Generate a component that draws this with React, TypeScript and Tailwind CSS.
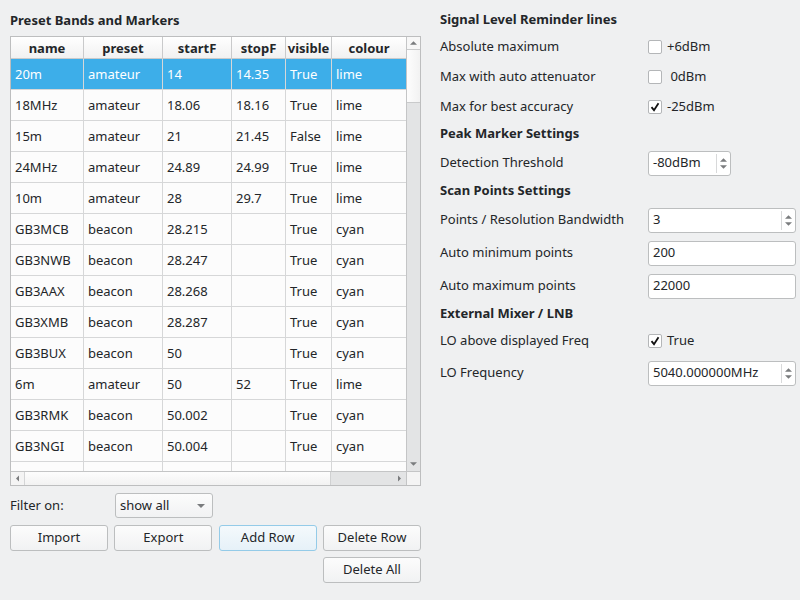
import React from 'react';

type Row = { name: string; preset: string; startF: string; stopF: string; visible: string; colour: string };

const rows: Row[] = [
  { name: '20m', preset: 'amateur', startF: '14', stopF: '14.35', visible: 'True', colour: 'lime' },
  { name: '18MHz', preset: 'amateur', startF: '18.06', stopF: '18.16', visible: 'True', colour: 'lime' },
  { name: '15m', preset: 'amateur', startF: '21', stopF: '21.45', visible: 'False', colour: 'lime' },
  { name: '24MHz', preset: 'amateur', startF: '24.89', stopF: '24.99', visible: 'True', colour: 'lime' },
  { name: '10m', preset: 'amateur', startF: '28', stopF: '29.7', visible: 'True', colour: 'lime' },
  { name: 'GB3MCB', preset: 'beacon', startF: '28.215', stopF: '', visible: 'True', colour: 'cyan' },
  { name: 'GB3NWB', preset: 'beacon', startF: '28.247', stopF: '', visible: 'True', colour: 'cyan' },
  { name: 'GB3AAX', preset: 'beacon', startF: '28.268', stopF: '', visible: 'True', colour: 'cyan' },
  { name: 'GB3XMB', preset: 'beacon', startF: '28.287', stopF: '', visible: 'True', colour: 'cyan' },
  { name: 'GB3BUX', preset: 'beacon', startF: '50', stopF: '', visible: 'True', colour: 'cyan' },
  { name: '6m', preset: 'amateur', startF: '50', stopF: '52', visible: 'True', colour: 'lime' },
  { name: 'GB3RMK', preset: 'beacon', startF: '50.002', stopF: '', visible: 'True', colour: 'cyan' },
  { name: 'GB3NGI', preset: 'beacon', startF: '50.004', stopF: '', visible: 'True', colour: 'cyan' },
  { name: '', preset: '', startF: '', stopF: '', visible: '', colour: '' },
];

const cols = 'grid grid-cols-[73px_79px_69px_54px_46px_75px]';
const headers = ['name', 'preset', 'startF', 'stopF', 'visible', 'colour'];

const Arrow = ({ dir, className = '' }: { dir: 'up' | 'down' | 'left' | 'right'; className?: string }) => {
  const pts = {
    up: '0,4 4,0 8,4',
    down: '0,0 8,0 4,4',
    left: '4,0 4,8 0,4',
    right: '0,0 0,8 4,4',
  }[dir];
  const vb = dir === 'up' || dir === 'down' ? '0 0 8 4' : '0 0 4 8';
  return (
    <svg viewBox={vb} className={className}>
      <polygon points={pts} fill="#7a7c7e" />
    </svg>
  );
};

const CheckBox = ({ checked }: { checked?: boolean }) => (
  <div className="w-[14px] h-[14px] border border-[#b4b6b8] bg-white rounded-[2px] flex items-center justify-center">
    {checked && (
      <svg viewBox="0 0 12 12" className="w-[12px] h-[12px]">
        <path d="M2.5 6.2 L5 9.2 L9.5 2.2" stroke="#111" strokeWidth="1.8" fill="none" />
      </svg>
    )}
  </div>
);

const SpinButtons = () => (
  <div className="w-[14px] h-full border-l border-[#d8d9da] flex flex-col items-center justify-center gap-[3px]">
    <Arrow dir="up" className="w-[7px] h-[4px]" />
    <Arrow dir="down" className="w-[7px] h-[4px]" />
  </div>
);

const SpinBox = ({ value, width }: { value: string; width: string }) => (
  <div className={`${width} h-[25px] border border-[#bcbebf] rounded-[3px] bg-white flex items-center`}>
    <span className="flex-1 pl-[4px]">{value}</span>
    <div className="h-[19px]">
      <SpinButtons />
    </div>
  </div>
);

const LineEdit = ({ value }: { value: string }) => (
  <div className="w-[148px] h-[25px] border border-[#bcbebf] rounded-[3px] bg-white flex items-center pl-[4px]">{value}</div>
);

const Button = ({ label, focus }: { label: string; focus?: boolean }) => (
  <button
    className={`w-[98px] h-[26px] rounded-[3px] border ${
      focus ? 'border-[#94cbe8] bg-gradient-to-b from-[#f4f9fc] to-[#e6f1f8]' : 'border-[#bcbebf] bg-gradient-to-b from-[#fcfcfc] to-[#f1f2f3]'
    } text-[13px] text-[#232629] flex items-center justify-center`}
  >
    {label}
  </button>
);

export default function App() {
  return (
    <div className="w-[800px] h-[600px] bg-[#eff0f1] flex font-['Noto_Sans',sans-serif] text-[13px] text-[#232629]">
      {/* left: presets table */}
      <div className="ml-[10px] w-[411px] flex flex-col">
        <div className="pt-[10px] h-[30px] font-bold leading-[20px]">Preset Bands and Markers</div>
        <div className="mt-[6px] h-[450px] border border-[#bdbebf] bg-white flex flex-col">
          <div className="flex h-[434px]">
            <div className="w-[395px] overflow-hidden">
              <div className={`${cols} h-[22px] bg-gradient-to-b from-white to-[#f1f1f1] border-b border-[#c9cacb]`}>
                {headers.map((h) => (
                  <div key={h} className="border-r border-[#c9cacb] font-bold flex items-center justify-center leading-none pt-[2px]">
                    {h}
                  </div>
                ))}
              </div>
              {rows.map((r, i) => {
                const sel = i === 0;
                return (
                  <div
                    key={i}
                    className={`${cols} h-[31px] border-b border-[#d6d7d8] ${sel ? 'bg-[#3daee9] text-white' : 'bg-[#fcfcfc]'}`}
                  >
                    {[r.name, r.preset, r.startF, r.stopF, r.visible, r.colour].map((c, j) => (
                      <div key={j} className="border-r border-[#d6d7d8] pl-[4px] pt-[2px] flex items-center whitespace-nowrap">
                        {c}
                      </div>
                    ))}
                  </div>
                );
              })}
            </div>
            {/* vertical scrollbar */}
            <div className="w-[14px] border-l border-[#c4c5c6] flex flex-col bg-[#e3e4e5]">
              <div className="h-[13px] bg-[#f7f7f7] border-b border-[#c9cacb] flex items-center justify-center">
                <Arrow dir="up" className="w-[7px] h-[4px]" />
              </div>
              <div className="h-[53px] bg-gradient-to-r from-[#fdfdfd] to-[#f2f2f2] border-b border-[#c9cacb]" />
              <div className="flex-1" />
              <div className="h-[15px] flex items-center justify-center">
                <Arrow dir="down" className="w-[7px] h-[4px]" />
              </div>
            </div>
          </div>
          {/* horizontal scrollbar */}
          <div className="h-[14px] border-t border-[#c4c5c6] flex">
            <div className="w-[14px] bg-[#f4f4f4] border-r border-[#d4d5d6] flex items-center justify-center">
              <Arrow dir="left" className="w-[3px] h-[7px]" />
            </div>
            <div className="w-[306px] bg-gradient-to-b from-[#fdfdfd] to-[#f2f2f2] border-r border-[#d0d1d2]" />
            <div className="w-[61px] bg-[#e3e4e5]" />
            <div className="w-[14px] bg-[#e3e4e5] flex items-center justify-center">
              <Arrow dir="right" className="w-[3px] h-[7px]" />
            </div>
            <div className="flex-1 border-l border-[#c4c5c6] bg-[#f4f4f4]" />
          </div>
        </div>
        {/* filter */}
        <div className="mt-[7px] h-[25px] flex items-center">
          <span className="w-[105px]">Filter on:</span>
          <div className="w-[98px] h-[25px] rounded-[3px] border border-[#bcbebf] bg-gradient-to-b from-[#fcfcfc] to-[#f1f2f3] flex items-center pl-[4px] pr-[7px]">
            <span className="flex-1">show all</span>
            <Arrow dir="down" className="w-[8px] h-[4px]" />
          </div>
        </div>
        <div className="mt-[7px] flex justify-between">
          <Button label="Import" />
          <Button label="Export" />
          <Button label="Add Row" focus />
          <Button label="Delete Row" />
        </div>
        <div className="mt-[6px] flex justify-end">
          <Button label="Delete All" />
        </div>
      </div>

      {/* right: settings */}
      <div className="ml-[19px] w-[356px] flex flex-col pt-[9px]">
        <div className="h-[22px] flex items-center font-bold">Signal Level Reminder lines</div>
        <div className="mt-[1px] h-[30px] flex items-center">
          <span className="w-[208px]">Absolute maximum</span>
          <CheckBox />
          <span className="ml-[5px]">+6dBm</span>
        </div>
        <div className="h-[30px] flex items-center">
          <span className="w-[208px]">Max with auto attenuator</span>
          <CheckBox />
          <span className="ml-[5px]">&nbsp;0dBm</span>
        </div>
        <div className="h-[30px] flex items-center">
          <span className="w-[208px]">Max for best accuracy</span>
          <CheckBox checked />
          <span className="ml-[5px]">-25dBm</span>
        </div>
        <div className="h-[24px] flex items-center font-bold">Peak Marker Settings</div>
        <div className="h-[34px] flex items-center">
          <span className="w-[208px]">Detection Threshold</span>
          <SpinBox value="-80dBm" width="w-[83px]" />
        </div>
        <div className="h-[22px] flex items-center font-bold">Scan Points Settings</div>
        <div className="h-[36px] flex items-center">
          <span className="w-[208px]">Points / Resolution Bandwidth</span>
          <SpinBox value="3" width="w-[148px]" />
        </div>
        <div className="h-[30px] flex items-center">
          <span className="w-[208px]">Auto minimum points</span>
          <LineEdit value="200" />
        </div>
        <div className="h-[36px] flex items-center">
          <span className="w-[208px]">Auto maximum points</span>
          <LineEdit value="22000" />
        </div>
        <div className="h-[20px] flex items-center font-bold">External Mixer / LNB</div>
        <div className="h-[34px] flex items-center">
          <span className="w-[208px]">LO above displayed Freq</span>
          <CheckBox checked />
          <span className="ml-[5px]">True</span>
        </div>
        <div className="h-[30px] flex items-center">
          <span className="w-[208px]">LO Frequency</span>
          <SpinBox value="5040.000000MHz" width="w-[148px]" />
        </div>
      </div>
    </div>
  );
}
